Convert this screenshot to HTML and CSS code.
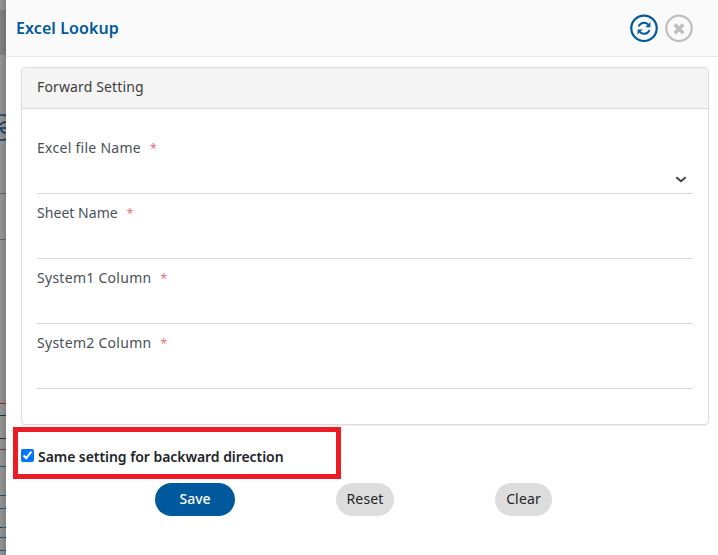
FILE: index.html
```html
<!DOCTYPE html>
<html lang="en">
<head>
<meta charset="utf-8">
<title>Excel Lookup</title>
<link rel="stylesheet" href="styles.css">
</head>
<body>
<div class="backdrop">
  <svg width="6" height="555" viewBox="0 0 6 555" fill="none">
    <path fill="#818181" d="M0 10h6v45H0z"/>
    <path stroke="#64676a" d="M0 193.5h6M0 239.5h6"/>
    <path stroke="#073e6b" stroke-width="1.600" d="M0 115h4l2 1M0 125q2-3 6-3M0 128h6M1 128q0 5 5 5M0 140h4l2-1"/>
    <path stroke="#8b2f33" d="M0 403.5h6M0 449.5h6"/>
    <path stroke="#17304d" d="M0 415.5h6M0 438.5h6"/>
    <path stroke="#245982" d="M0 466.5h6M0 495.5h6"/>
    <path stroke="#174a73" stroke-dasharray="3 1" d="M0 508.5h6M0 527.5h6M0 537.5h6M0 550.5h6"/>
  </svg>
</div>
<main class="panel">
  <header class="header">
    <h1 class="title">Excel Lookup</h1>
    <button class="icon-btn" aria-label="Refresh">
      <svg width="28" height="28" viewBox="0 0 28 28" fill="none" stroke="#00599c">
        <circle cx="14" cy="14.300" r="12.700" stroke-width="2.200"/>
        <path stroke-width="2" d="M8.600 12.500A5.700 5.700 0 0 1 18 10.500M19.400 16.100A5.700 5.700 0 0 1 10 18.100"/>
        <path fill="#00599c" stroke="none" d="M20.400 8.100v5.100h-5.100zM7.600 20.500v-5.100h5.100z"/>
      </svg>
    </button>
    <button class="icon-btn" aria-label="Close">
      <svg width="28" height="28" viewBox="0 0 28 28" fill="none" stroke="#bebebe">
        <circle cx="14" cy="14.300" r="12.700" stroke-width="2.200"/>
        <path stroke-width="3.500" d="M9.700 10.600l8.600 8.600M18.300 10.600l-8.600 8.600"/>
      </svg>
    </button>
  </header>
  <section class="card">
    <h2 class="card-head">Forward Setting</h2>
    <div class="fields">
      <div class="field"><span class="label excel">Excel file Name</span><span class="req">*</span>
        <svg class="chevron" width="12" height="8" viewBox="0 0 12 8" fill="none" stroke="#444" stroke-width="2"><path d="M1.300 1.300L6 5.300l4.700-4"/></svg>
      </div>
      <div class="field"><span class="label sheet">Sheet Name</span><span class="req">*</span></div>
      <div class="field"><span class="label system">System1 Column</span><span class="req">*</span></div>
      <div class="field"><span class="label system">System2 Column</span><span class="req">*</span></div>
    </div>
  </section>
  <label class="same"><input type="checkbox" checked><span class="same-text">Same setting for backward direction</span></label>
  <div class="actions">
    <button class="btn save">Save</button>
    <button class="btn reset">Reset</button>
    <button class="btn clear">Clear</button>
  </div>
</main>
</body>
</html>
```
FILE: styles.css
```css
* { box-sizing: border-box; }
body {
  margin: 0;
  height: 555px;
  display: flex;
  overflow: hidden;
  font: 14px/20px "Noto Sans", sans-serif;
  color: #3c3c3c;
}
.backdrop {
  width: 6px;
  height: 555px;
  background: #949494;
  position: relative;
}
.backdrop svg { display: block; }
.backdrop::after {
  content: "";
  position: absolute;
  inset: 0;
  background: linear-gradient(90deg, transparent, rgba(0, 0, 0, .13));
}
.panel { width: 712px; background: #fff; }
.header {
  display: flex;
  align-items: center;
  height: 57px;
  padding: 0 25px 0 10px;
  gap: 7px;
  background: #fafafa;
  border-bottom: 1px solid #e7e7e7;
}
.title {
  margin: 0 auto 0 0;
  font-size: 16px;
  font-weight: 600;
  letter-spacing: .1px;
  color: #00599c;
}
.icon-btn { border: 0; padding: 0; background: none; width: 28px; height: 28px; }
.icon-btn svg { display: block; overflow: visible; }
.card {
  width: 688px;
  height: 358px;
  margin: 10px 0 0 15px;
  border: 1px solid #dcdcdc;
  border-radius: 4px;
  box-shadow: 0 1px 1px rgba(0, 0, 0, .06);
  overflow: hidden;
}
.card-head {
  margin: 0;
  height: 41px;
  padding: 9px 15px;
  background: #f4f4f4;
  border-bottom: 1px solid #dcdcdc;
  font-size: 14px;
  font-weight: 400;
  letter-spacing: .14px;
}
.fields { padding: 20px 15px 0; }
.field {
  height: 65px;
  padding-top: 9px;
  border-bottom: 1px solid #d8d8d8;
  display: flex;
  align-items: flex-start;
}
.label { color: #495057; }
.excel { letter-spacing: .28px; }
.sheet { letter-spacing: .05px; }
.system { letter-spacing: .28px; }
.req { color: #ef6b67; margin: 1px 0 0 9px; font-size: 12px; }
.chevron { margin: 38px 6px 0 auto; }
.same {
  width: 328px;
  height: 52px;
  margin: 2px 0 0 7px;
  padding: 8px 0 0 3px;
  border: 5px solid #ed1c24;
  display: flex;
  align-items: center;
  color: #212529;
  font-weight: 600;
  letter-spacing: -.06px;
}
.same input { width: 13px; height: 13px; margin: 0 4px 3px 0; }
.same-text { padding-bottom: 1px; }
.actions { display: flex; margin: 4px 0 0 149px; }
.btn {
  height: 33px;
  padding: 0 0 2px;
  border: 0;
  border-radius: 17px;
  background: #ddd;
  color: #212529;
  font: 14px/20px "Noto Sans", sans-serif;
  letter-spacing: .15px;
}
.save { width: 80px; background: #00599c; color: #fff; font-weight: 500; letter-spacing: 0; }
.reset { width: 58px; margin-left: 101px; }
.clear { width: 57px; margin-left: 101px; }
```
